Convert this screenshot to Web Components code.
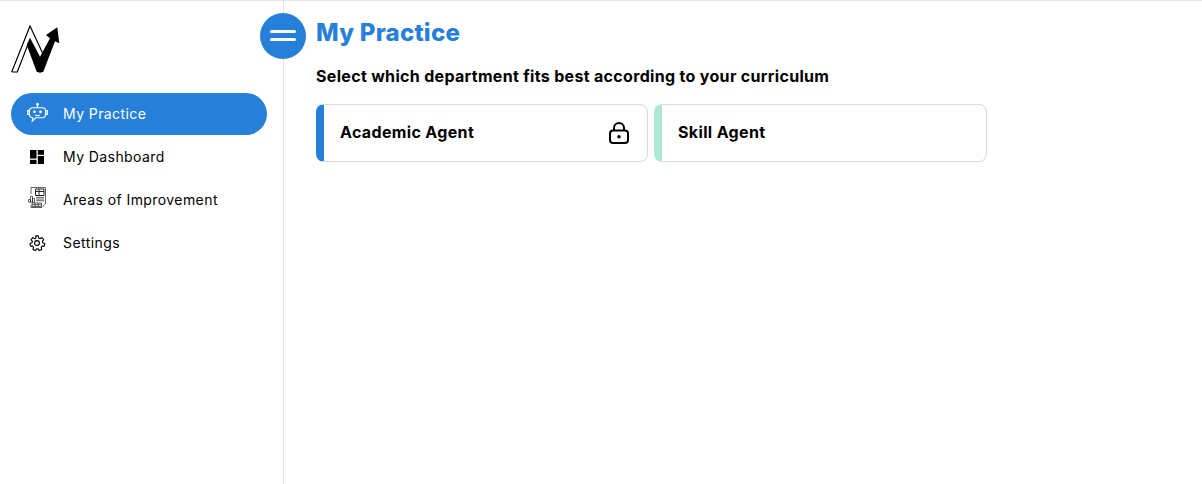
<!DOCTYPE html>
<html lang="en">
<head>
<meta charset="utf-8">
<title>My Practice</title>
<style>
  html, body { margin: 0; height: 100%; background: #fff; }
  body { font-family: Inter, "Noto Sans", sans-serif; color: #000; overflow: hidden; }
</style>
</head>
<body>
<app-shell>
  <side-nav slot="nav">
    <nav-item active label="My Practice">
      <svg slot="icon" style="margin-bottom:3px" width="21" height="20" viewBox="0 0 22 21" fill="none" stroke="currentColor" stroke-width="1.200">
        <circle cx="11" cy="1.600" r="1.500" fill="currentColor" stroke="none"/>
        <path d="M11 2.500v2.500"/>
        <path d="M6 5h10a3.500 3.500 0 0 1 3.500 3.500v3.500a3.500 3.500 0 0 1-3.500 3.500H9l-3.500 3.500.5-3.500a3.500 3.500 0 0 1-3.500-3.500V8.500A3.500 3.500 0 0 1 6 5z"/>
        <path d="M2.500 8H.7v4h1.800M19.500 8h1.800v4h-1.800"/>
        <circle cx="7.800" cy="9.300" r="1.500" fill="currentColor" stroke="none"/>
        <circle cx="14.200" cy="9.300" r="1.500" fill="currentColor" stroke="none"/>
        <path d="M8.500 12.600q2.500 1.200 5 0"/>
      </svg>
    </nav-item>
    <nav-item label="My Dashboard">
      <svg slot="icon" width="14" height="14" viewBox="0 0 14 14" fill="currentColor">
        <rect x="0" y="0" width="6.500" height="8.500"/>
        <rect x="7.800" y="0" width="6.200" height="4.800"/>
        <rect x="0" y="9.800" width="6.500" height="4.200"/>
        <rect x="7.800" y="6" width="6.200" height="8"/>
      </svg>
    </nav-item>
    <nav-item label="Areas of Improvement">
      <svg slot="icon" style="margin-bottom:6px" width="18" height="21" viewBox="0 0 18 21" fill="none" stroke="#222" stroke-width=".7">
        <path d="M3 7V.5h14.500v16l-3.500 4H3V18"/>
        <path d="M7.500 2h8.500v6.500H7.500zM7.500 4.500H16M11 2v6.500" stroke-width="1"/>
        <path d="M.5 15v-2.500h2V15M2.500 15V9.500h2V15M4.500 15v-3.500h2V15M.4 15.200h6.500"/>
        <path d="M8 10.300h8M8 12h8M8 13.700h8"/>
        <path d="M4 16h9.500v3.500H4zM4 17.700h9.500M7 16v3.500M10.200 16v3.500"/>
      </svg>
    </nav-item>
    <nav-item label="Settings">
      <svg slot="icon" width="18" height="18" viewBox="0 0 24 24" fill="none" stroke="currentColor" stroke-width="1.500" stroke-linejoin="round">
        <circle cx="12" cy="12" r="3.200"/>
        <path d="M10.300 2.500h3.400l.6 2.900 1.700.8 2.600-1.400 2.300 2.600-1.700 2.400.5 1.900 2.700 1-.7 3.400-2.900.1-1.200 1.500.7 2.900-3.100 1.500-1.800-2.300h-1.800l-1.800 2.300-3.100-1.500.7-2.900-1.200-1.500-2.900-.1-.7-3.400 2.700-1 .5-1.900-1.700-2.400 2.300-2.600 2.600 1.400 1.700-.8z"/>
      </svg>
    </nav-item>
  </side-nav>
  <menu-toggle slot="toggle"></menu-toggle>
  <practice-page heading="My Practice" subheading="Select which department fits best according to your curriculum">
    <agent-card label="Academic Agent" accent="#2680d9" locked></agent-card>
    <agent-card label="Skill Agent" accent="#aee8cf"></agent-card>
  </practice-page>
</app-shell>

<script>
class AppShell extends HTMLElement {
  constructor() {
    super();
    this.attachShadow({ mode: 'open' });
    this.shadowRoot.innerHTML = `
      <style>
        :host {
          display: grid;
          grid-template-columns: 284px 1fr;
          height: 484px;
          box-sizing: border-box;
          border-top: 1px solid #e6e6e6;
          position: relative;
        }
        .toggle { position: absolute; left: 260px; top: 12px; }
      </style>
      <slot name="nav"></slot>
      <main><slot></slot></main>
      <div class="toggle"><slot name="toggle"></slot></div>
    `;
  }
}

class SideNav extends HTMLElement {
  constructor() {
    super();
    this.attachShadow({ mode: 'open' });
    this.shadowRoot.innerHTML = `
      <style>
        :host {
          display: flex;
          flex-direction: column;
          box-sizing: border-box;
          padding: 24px 16px 0 11px;
          border-right: 1px solid #e4e4e4;
        }
        .logo { display: block; margin-bottom: 18px; }
        .items { display: flex; flex-direction: column; gap: 1px; }
      </style>
      <svg class="logo" width="50" height="50" viewBox="0 0 50 50" fill="none">
        <path d="M.7 47 19 1l13 28M.7 47h5.600L17.500 18" stroke="#000" stroke-width="1.200"/>
        <path d="M15.700 20 19 12.700l10 19 10-18.400-4-3.300 11.300-7.700 2 16-4.300-2-11.700 30.400-3.300 1-3.300-1z" fill="#000"/>
      </svg>
      <div class="items"><slot></slot></div>
    `;
  }
}

class NavItem extends HTMLElement {
  constructor() {
    super();
    this.attachShadow({ mode: 'open' });
    this.shadowRoot.innerHTML = `
      <style>
        :host {
          display: flex;
          align-items: center;
          height: 42px;
          border-radius: 21px;
          color: #000;
          font-size: 14px;
          letter-spacing: .42px;
        }
        :host([active]) { background: #2680d9; color: #fff; }
        .icon { width: 52px; display: flex; justify-content: center; }
        .label { padding-bottom: 2px; }
      </style>
      <span class="icon"><slot name="icon"></slot></span>
      <span class="label"></span>
    `;
  }

  connectedCallback() {
    this.shadowRoot.querySelector('.label').textContent = this.getAttribute('label');
  }
}

class MenuToggle extends HTMLElement {
  constructor() {
    super();
    this.attachShadow({ mode: 'open' });
    this.shadowRoot.innerHTML = `
      <style>
        :host {
          display: flex;
          flex-direction: column;
          justify-content: center;
          gap: 5px;
          box-sizing: border-box;
          width: 46px;
          height: 46px;
          padding: 0 10px 2px;
          border-radius: 50%;
          background: #2680d9;
        }
        i { display: block; height: 3px; border-radius: 2px; background: #fff; }
      </style>
      <i></i><i></i>
    `;
  }
}

class PracticePage extends HTMLElement {
  constructor() {
    super();
    this.attachShadow({ mode: 'open' });
    this.shadowRoot.innerHTML = `
      <style>
        :host { display: block; padding: 14px 0 0 32px; }
        h1 {
          margin: 0;
          height: 36px;
          line-height: 36px;
          font-size: 24px;
          font-weight: 800;
          color: #2680d9;
          letter-spacing: .25px;
        }
        p {
          margin: 14px 0 0;
          height: 22px;
          line-height: 22px;
          font-size: 16px;
          font-weight: 700;
          letter-spacing: .32px;
        }
        .cards { display: grid; grid-template-columns: 332px 333px; gap: 6px; margin-top: 17px; }
      </style>
      <h1></h1>
      <p></p>
      <div class="cards"><slot></slot></div>
    `;
  }

  connectedCallback() {
    this.shadowRoot.querySelector('h1').textContent = this.getAttribute('heading');
    this.shadowRoot.querySelector('p').textContent = this.getAttribute('subheading');
  }
}

class AgentCard extends HTMLElement {
  constructor() {
    super();
    this.attachShadow({ mode: 'open' });
    this.shadowRoot.innerHTML = `
      <style>
        :host {
          display: flex;
          align-items: center;
          justify-content: space-between;
          box-sizing: border-box;
          height: 58px;
          padding: 0 18px 0 16px;
          border: 1px solid #dcdcdc;
          border-left: 8px solid var(--accent);
          border-radius: 8px;
          font-size: 16px;
          font-weight: 700;
          letter-spacing: .35px;
        }
        .label { padding-bottom: 2px; }
        svg { display: none; }
        :host([locked]) svg { display: block; }
      </style>
      <span class="label"></span>
      <svg width="20" height="22" viewBox="0 0 20 22" fill="none" stroke="#000" stroke-width="2">
        <rect x="1" y="8.500" width="18" height="12.500" rx="3"/>
        <path d="M5 8.500V6a5 5 0 0 1 10 0v2.500"/>
        <circle cx="10" cy="14.800" r="1.800" fill="#000" stroke="none"/>
      </svg>
    `;
  }

  connectedCallback() {
    this.style.setProperty('--accent', this.getAttribute('accent'));
    this.shadowRoot.querySelector('.label').textContent = this.getAttribute('label');
  }
}

customElements.define('app-shell', AppShell);
customElements.define('side-nav', SideNav);
customElements.define('nav-item', NavItem);
customElements.define('menu-toggle', MenuToggle);
customElements.define('practice-page', PracticePage);
customElements.define('agent-card', AgentCard);
</script>
</body>
</html>
